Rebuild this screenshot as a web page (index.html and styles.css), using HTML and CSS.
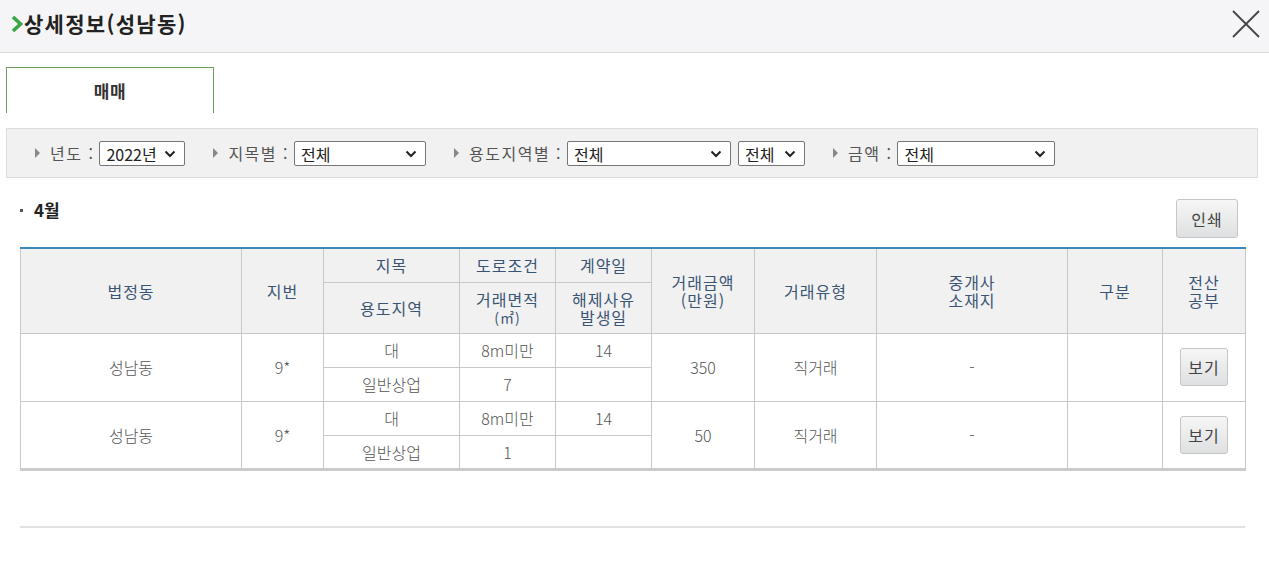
FILE: index.html
```html
<!DOCTYPE html>
<html lang="ko">
<head>
    <meta charset="UTF-8">
    <title>상세정보(성남동)</title>
    <link rel="stylesheet" href="styles.css">
</head>
<body>
    <div class="popup-header">
        <h1 class="popup-title">
            <svg class="title-arrow" width="12" height="18" viewBox="0 0 12 18"><path d="M2 2 L9.5 9 L2 16" fill="none" stroke="#3aa648" stroke-width="3.6"/></svg>
            상세정보(성남동)
        </h1>
        <button class="close-btn" aria-label="닫기">
            <svg width="30" height="30" viewBox="0 0 30 30"><path d="M2 2 L28 28 M28 2 L2 28" stroke="#444" stroke-width="1.8"/></svg>
        </button>
    </div>

    <div class="tabs">
        <div class="tab active">매매</div>
    </div>

    <div class="filter-bar">
        <div class="filter">
            <span class="arrow"></span>
            <label for="year">년도 :</label>
            <div class="select-box sel-year">
                <select id="year"><option>2022년</option></select>
                <svg class="chev" width="12" height="8" viewBox="0 0 12 8"><path d="M1.5 1.5 L6 6 L10.5 1.5" fill="none" stroke="#222" stroke-width="2"/></svg>
            </div>
        </div>
        <div class="filter">
            <span class="arrow"></span>
            <label for="jimok">지목별 :</label>
            <div class="select-box sel-jimok">
                <select id="jimok"><option>전체</option></select>
                <svg class="chev" width="12" height="8" viewBox="0 0 12 8"><path d="M1.5 1.5 L6 6 L10.5 1.5" fill="none" stroke="#222" stroke-width="2"/></svg>
            </div>
        </div>
        <div class="filter">
            <span class="arrow"></span>
            <label for="yongdo">용도지역별 :</label>
            <div class="select-box sel-yongdo">
                <select id="yongdo"><option>전체</option></select>
                <svg class="chev" width="12" height="8" viewBox="0 0 12 8"><path d="M1.5 1.5 L6 6 L10.5 1.5" fill="none" stroke="#222" stroke-width="2"/></svg>
            </div>
            <div class="select-box sel-yongdo2">
                <select id="yongdo2"><option>전체</option></select>
                <svg class="chev" width="12" height="8" viewBox="0 0 12 8"><path d="M1.5 1.5 L6 6 L10.5 1.5" fill="none" stroke="#222" stroke-width="2"/></svg>
            </div>
        </div>
        <div class="filter">
            <span class="arrow"></span>
            <label for="price">금액 :</label>
            <div class="select-box sel-price">
                <select id="price"><option>전체</option></select>
                <svg class="chev" width="12" height="8" viewBox="0 0 12 8"><path d="M1.5 1.5 L6 6 L10.5 1.5" fill="none" stroke="#222" stroke-width="2"/></svg>
            </div>
        </div>
    </div>

    <div class="section-head">
        <h2 class="month"><span class="dot"></span>4월</h2>
        <button class="btn btn-print">인쇄</button>
    </div>

    <table class="deal-table">
        <colgroup>
            <col style="width:221px">
            <col style="width:82px">
            <col style="width:136px">
            <col style="width:96px">
            <col style="width:96px">
            <col style="width:103px">
            <col style="width:122px">
            <col style="width:191px">
            <col style="width:95px">
            <col style="width:83px">
        </colgroup>
        <thead>
            <tr class="head-top">
                <th rowspan="2">법정동</th>
                <th rowspan="2">지번</th>
                <th>지목</th>
                <th>도로조건</th>
                <th>계약일</th>
                <th rowspan="2"><span class="ln">거래금액</span><span class="ln">(만원)</span></th>
                <th rowspan="2">거래유형</th>
                <th rowspan="2"><span class="ln">중개사</span><span class="ln">소재지</span></th>
                <th rowspan="2">구분</th>
                <th rowspan="2"><span class="ln">전산</span><span class="ln">공부</span></th>
            </tr>
            <tr class="head-bottom">
                <th>용도지역</th>
                <th><span class="ln">거래면적</span><span class="ln unit">(㎡)</span></th>
                <th><span class="ln">해제사유</span><span class="ln">발생일</span></th>
            </tr>
        </thead>
        <tbody>
            <tr class="row-a">
                <td rowspan="2">성남동</td>
                <td rowspan="2">9*</td>
                <td>대</td>
                <td>8m미만</td>
                <td>14</td>
                <td rowspan="2">350</td>
                <td rowspan="2">직거래</td>
                <td rowspan="2">-</td>
                <td rowspan="2"></td>
                <td rowspan="2"><button class="btn btn-view">보기</button></td>
            </tr>
            <tr class="row-b">
                <td>일반상업</td>
                <td>7</td>
                <td></td>
            </tr>
            <tr class="row-a">
                <td rowspan="2">성남동</td>
                <td rowspan="2">9*</td>
                <td>대</td>
                <td>8m미만</td>
                <td>14</td>
                <td rowspan="2">50</td>
                <td rowspan="2">직거래</td>
                <td rowspan="2">-</td>
                <td rowspan="2"></td>
                <td rowspan="2"><button class="btn btn-view">보기</button></td>
            </tr>
            <tr class="row-b last">
                <td>일반상업</td>
                <td>1</td>
                <td></td>
            </tr>
        </tbody>
    </table>

    <div class="bottom-line"></div>
</body>
</html>
```

FILE: styles.css
```css
body {
    margin: 0;
    font-family: "Noto Sans CJK KR", "Noto Sans", sans-serif;
    color: #333;
    background: #fff;
}
.popup-header {
    height: 52px;
    background: #f5f5f7;
    border-bottom: 1px solid #dadada;
    display: flex;
    align-items: center;
    justify-content: space-between;
    padding: 0 8px 0 11px;
}
.popup-title {
    margin: 0 0 6px;
    font-size: 21px;
    font-weight: 700;
    color: #222;
    display: flex;
    align-items: center;
    letter-spacing: 1.3px;
}
.title-arrow {
    margin: 2px 1px 0 0;
}
.close-btn {
    background: none;
    border: none;
    padding: 0;
    width: 30px;
    height: 30px;
    margin-bottom: 4px;
    cursor: pointer;
}
.tabs {
    display: flex;
    padding: 14px 0 0 6px;
}
.tab {
    width: 206px;
    height: 45px;
    border: 1px solid #6b9e5e;
    border-bottom: none;
    display: flex;
    align-items: center;
    justify-content: center;
    font-size: 17px;
    font-weight: 700;
    color: #333;
    letter-spacing: 0.5px;
}
.filter-bar {
    margin: 15px 11px 0 6px;
    height: 48px;
    background: #f1f1f1;
    border: 1px solid #dcdcdc;
    display: flex;
    align-items: center;
    padding-left: 28px;
    gap: 28px;
}
.filter {
    display: flex;
    align-items: center;
    font-size: 16px;
    color: #555;
}
.filter .arrow {
    width: 0;
    height: 0;
    border-top: 5px solid transparent;
    border-bottom: 5px solid transparent;
    border-left: 5px solid #888;
    margin-right: 10px;
}
.filter label {
    margin-right: 5px;
    letter-spacing: 1.5px;
}
.select-box {
    position: relative;
    height: 25px;
}
.select-box + .select-box {
    margin-left: 7px;
}
.select-box select {
    appearance: none;
    width: 100%;
    height: 25px;
    font-family: "Noto Sans CJK KR", sans-serif;
    font-size: 16px;
    color: #222;
    background: #fff;
    border: 1px solid #767676;
    border-radius: 2px;
    padding: 0 0 0 6px;
    margin: 0;
}
.select-box .chev {
    position: absolute;
    right: 9px;
    top: 9px;
    pointer-events: none;
}
.sel-year { width: 86px; }
.sel-jimok { width: 132px; }
.sel-yongdo { width: 164px; }
.sel-yongdo2 { width: 67px; }
.sel-price { width: 158px; }
.section-head {
    display: flex;
    justify-content: space-between;
    align-items: flex-start;
    padding: 20px 31px 0 20px;
}
.month {
    margin: 0;
    font-size: 17px;
    font-weight: 700;
    color: #222;
    line-height: 24px;
    display: flex;
    align-items: center;
}
.month .dot {
    width: 3px;
    height: 3px;
    background: #555;
    margin-right: 11px;
}
.btn {
    background: linear-gradient(#f6f6f6, #dee0e1);
    border: 1px solid #c6c6c6;
    border-radius: 3px;
    color: #444;
    font-family: "Noto Sans CJK KR", sans-serif;
    font-size: 16px;
    cursor: pointer;
    padding: 0;
}
.btn-print {
    width: 62px;
    height: 39px;
    margin-top: 1px;
    letter-spacing: 1px;
}
.deal-table {
    margin: 9px 0 0 20px;
    width: 1225px;
    border-collapse: collapse;
    table-layout: fixed;
    border-top: 2px solid #3d87bf;
}
.deal-table th,
.deal-table td {
    border: 1px solid #c8c8c8;
    text-align: center;
    padding: 0;
}
.deal-table th {
    background: #f1f1f1;
    color: #3a5574;
    font-size: 16px;
    font-weight: 400;
    line-height: 18px;
    letter-spacing: 1px;
}
.deal-table .ln {
    display: block;
    height: 18px;
    line-height: 18px;
}
.deal-table .unit {
    font-size: 14px;
}
.head-top {
    height: 34px;
}
.head-bottom {
    height: 51px;
}
.deal-table td {
    font-size: 16px;
    color: #555;
    font-weight: 300;
}
.row-a {
    height: 34px;
}
.row-b {
    height: 34px;
}
.row-b.last td {
    border-bottom: 3px solid #cccccc;
}
.deal-table tr.row-a td[rowspan] {
    border-bottom: 3px solid #cccccc;
}
.deal-table tbody tr:first-child td[rowspan] {
    border-bottom: 1px solid #c8c8c8;
}
.btn-view {
    width: 48px;
    height: 38px;
    letter-spacing: 1px;
}
.bottom-line {
    margin: 55px 24px 0 20px;
    border-top: 2px solid #e2e2e2;
}
```
